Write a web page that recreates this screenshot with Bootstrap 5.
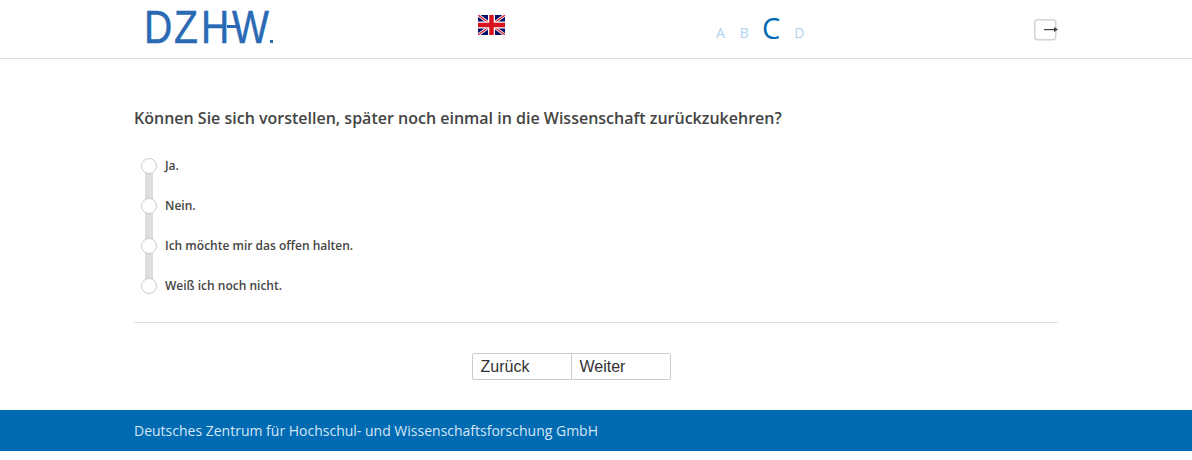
<!DOCTYPE html>
<html lang="de">
<head>
    <meta charset="UTF-8">
    <meta name="viewport" content="width=device-width, initial-scale=1.0">
    <title>DZHW Befragung</title>
    <link href="https://cdn.jsdelivr.net/npm/bootstrap@5.3.0/dist/css/bootstrap.min.css" rel="stylesheet">
    <style>
        body { font-family: "Open Sans", sans-serif; color: #444; background: #fff; }
        .page-wrap { width: 924px; margin: 0 auto; }
        .top-bar { height: 59px; border-bottom: 1px solid #ddd; }
        .logo-box { width: 344px; padding-left: 11px; height: 58px; }
        .logo-svg { display: block; overflow: visible; }
        .logo-text { font-family: "Liberation Sans", sans-serif; font-size: 46px; fill: #2a6ab5; stroke: #2a6ab5; stroke-width: 0.5px; }
        .flag-box { width: 238px; height: 58px; padding-top: 15px; }
        .step-box { width: 318px; height: 58px; gap: 14px; padding-bottom: 16px; }
        .step-letter { font-size: 14px; line-height: 19px; color: #aed2ee; }
        .step-letter.step-b { margin-left: 1px; }
        .step-now { font-size: 29px; line-height: 34px; color: #006ab3; position: relative; top: 3px; margin-left: -1px; }
        .exit-box { width: 24px; height: 58px; padding-top: 19px; }
        .exit-btn { display: block; width: 24px; height: 22px; padding: 0; border: 0; background: none; }
        .question { font-size: 16px; font-weight: 600; line-height: 22px; margin: 0; padding-top: 48px; color: #444; }
        .answer-list { position: relative; margin-top: 17px; padding-left: 7px; }
        .answer-list::before { content: ""; position: absolute; left: 11px; top: 20px; bottom: 20px; width: 8px; background: #ddd; }
        .answer-row { height: 40px; position: relative; }
        .answer-row .form-check-input { width: 16px; height: 16px; margin: 0; border-color: #ccc; flex: none; }
        .answer-row label { font-size: 12px; font-weight: 600; margin-left: 8px; color: #444; }
        .rule { border-top: 1px solid #ddd; margin-top: 16px; }
        .nav-btns { padding-top: 30px; padding-bottom: 30px; padding-right: 50px; }
        .nav-btns .btn { width: 100px; height: 27px; padding: 0 8px; text-align: left; font-family: "Liberation Sans", sans-serif; font-size: 16px; line-height: 25px; color: #333; background: #fff; border-color: #ccc; border-radius: 2px; }
        .foot-bar { background: #006ab3; height: 41px; color: #d5e7f4; font-size: 14px; line-height: 41px; }
    </style>
</head>
<body>
<header class="top-bar">
    <div class="page-wrap d-flex">
        <div class="logo-box d-flex align-items-center">
            <svg class="logo-svg" width="130" height="40" viewBox="0 0 130 40" role="img" aria-label="DZHW">
                <text class="logo-text" transform="scale(0.85 1)" x="-1.2 34.1 65.9 102.4" y="34">DZHW</text>
                <rect x="82" y="16" width="13" height="3" fill="#2a6ab5"></rect>
                <rect x="125" y="31" width="3" height="3" fill="#2a6ab5"></rect>
            </svg>
        </div>
        <div class="flag-box">
            <svg class="d-block" width="27" height="20" viewBox="0 0 27 20">
                <rect width="27" height="20" fill="#00126b"></rect>
                <path d="M0 0L27 20M27 0L0 20" stroke="#fff" stroke-width="3"></path>
                <path d="M0 0L27 20M27 0L0 20" stroke="#d8121f" stroke-width="1.2"></path>
                <path d="M13.5 0V20M0 10H27" stroke="#fff" stroke-width="7"></path>
                <path d="M13.5 0V20M0 10H27" stroke="#d8121f" stroke-width="4.5"></path>
            </svg>
        </div>
        <div class="step-box d-flex align-items-end">
            <span class="step-letter">A</span>
            <span class="step-letter step-b">B</span>
            <span class="step-now">C</span>
            <span class="step-letter">D</span>
        </div>
        <div class="exit-box">
            <button class="exit-btn" type="button" aria-label="Abmelden">
                <svg class="d-block" width="24" height="22" viewBox="0 0 24 22">
                    <rect x="0.75" y="0.75" width="21" height="20" rx="3" fill="#fff" stroke="#d4d4d4" stroke-width="1.5"></rect>
                    <rect x="10" y="10" width="12" height="1.2" fill="#444"></rect>
                    <path d="M20 8L24 10.6L20 13Z" fill="#444"></path>
                </svg>
            </button>
        </div>
    </div>
</header>

<main class="page-wrap">
    <h1 class="question">Können Sie sich vorstellen, später noch einmal in die Wissenschaft zurückzukehren?</h1>
    <form>
        <div class="answer-list">
            <div class="answer-row d-flex align-items-center">
                <input class="form-check-input" type="radio" name="zurueck" id="a1">
                <label for="a1">Ja.</label>
            </div>
            <div class="answer-row d-flex align-items-center">
                <input class="form-check-input" type="radio" name="zurueck" id="a2">
                <label for="a2">Nein.</label>
            </div>
            <div class="answer-row d-flex align-items-center">
                <input class="form-check-input" type="radio" name="zurueck" id="a3">
                <label for="a3">Ich möchte mir das offen halten.</label>
            </div>
            <div class="answer-row d-flex align-items-center">
                <input class="form-check-input" type="radio" name="zurueck" id="a4">
                <label for="a4">Weiß ich noch nicht.</label>
            </div>
        </div>
        <div class="rule"></div>
        <div class="nav-btns d-flex justify-content-center">
            <div class="btn-group">
                <button type="button" class="btn">Zurück</button>
                <button type="button" class="btn">Weiter</button>
            </div>
        </div>
    </form>
</main>

<footer class="foot-bar">
    <div class="page-wrap">Deutsches Zentrum für Hochschul- und Wissenschaftsforschung GmbH</div>
</footer>
<script src="https://cdn.jsdelivr.net/npm/bootstrap@5.3.0/dist/js/bootstrap.bundle.min.js"></script>
</body>
</html>
